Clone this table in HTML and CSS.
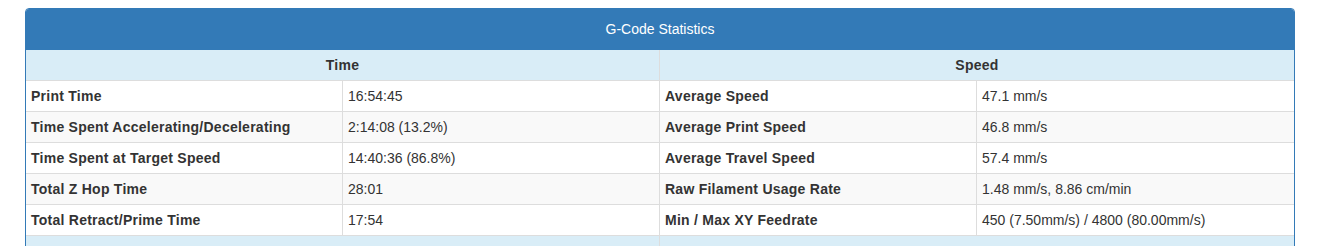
FILE: index.html
```html
<!DOCTYPE html>
<html>
<head>
<meta charset="utf-8">
<link rel="stylesheet" href="styles.css">
</head>
<body>
<div class="page">
  <div class="panel">
    <div class="panel-heading">G-Code Statistics</div>
    <table class="stats">
      <colgroup><col><col><col><col></colgroup>
      <tbody>
        <tr class="info"><th colspan="2">Time</th><th colspan="2">Speed</th></tr>
        <tr><th>Print Time</th><td>16:54:45</td><th>Average Speed</th><td>47.1 mm/s</td></tr>
        <tr><th>Time Spent Accelerating/Decelerating</th><td>2:14:08 (13.2%)</td><th>Average Print Speed</th><td>46.8 mm/s</td></tr>
        <tr><th>Time Spent at Target Speed</th><td>14:40:36 (86.8%)</td><th>Average Travel Speed</th><td>57.4 mm/s</td></tr>
        <tr><th>Total Z Hop Time</th><td>28:01</td><th>Raw Filament Usage Rate</th><td>1.48 mm/s, 8.86 cm/min</td></tr>
        <tr><th>Total Retract/Prime Time</th><td>17:54</td><th>Min / Max XY Feedrate</th><td>450 (7.50mm/s) / 4800 (80.00mm/s)</td></tr>
        <tr class="info"><th colspan="2">&nbsp;</th><th colspan="2">&nbsp;</th></tr>
      </tbody>
    </table>
  </div>
</div>
</body>
</html>
```
FILE: styles.css
```css
html, body {
  margin: 0;
  padding: 0;
  background: #fff;
}
body {
  font-family: "Liberation Sans", Arial, Helvetica, sans-serif;
  font-size: 14px;
  line-height: 20px;
  color: #333;
}
.page {
  padding: 8px 30px 0 25px;
}
.panel {
  border: 1px solid #337ab7;
  border-radius: 4px;
  background: #fff;
  overflow: hidden;
}
.panel-heading {
  background: #337ab7;
  color: #fff;
  text-align: center;
  padding: 10px 15px;
  border-bottom: 1px solid #337ab7;
}
.stats {
  width: 100%;
  border-collapse: separate;
  border-spacing: 0;
  table-layout: fixed;
}
.stats col {
  width: 25%;
}
.stats th,
.stats td {
  padding: 5px;
  border: 0;
  border-right: 1px solid #ddd;
  border-bottom: 1px solid #ddd;
  text-align: left;
  vertical-align: top;
  white-space: nowrap;
  overflow: hidden;
}
.stats th:last-child,
.stats td:last-child {
  border-right: 0;
}
.stats th {
  font-weight: bold;
  letter-spacing: 0.25px;
}
.stats tr:nth-child(odd) {
  background: #f9f9f9;
}
.stats tr.info th {
  background: #d9edf7;
  text-align: center;
}
```
